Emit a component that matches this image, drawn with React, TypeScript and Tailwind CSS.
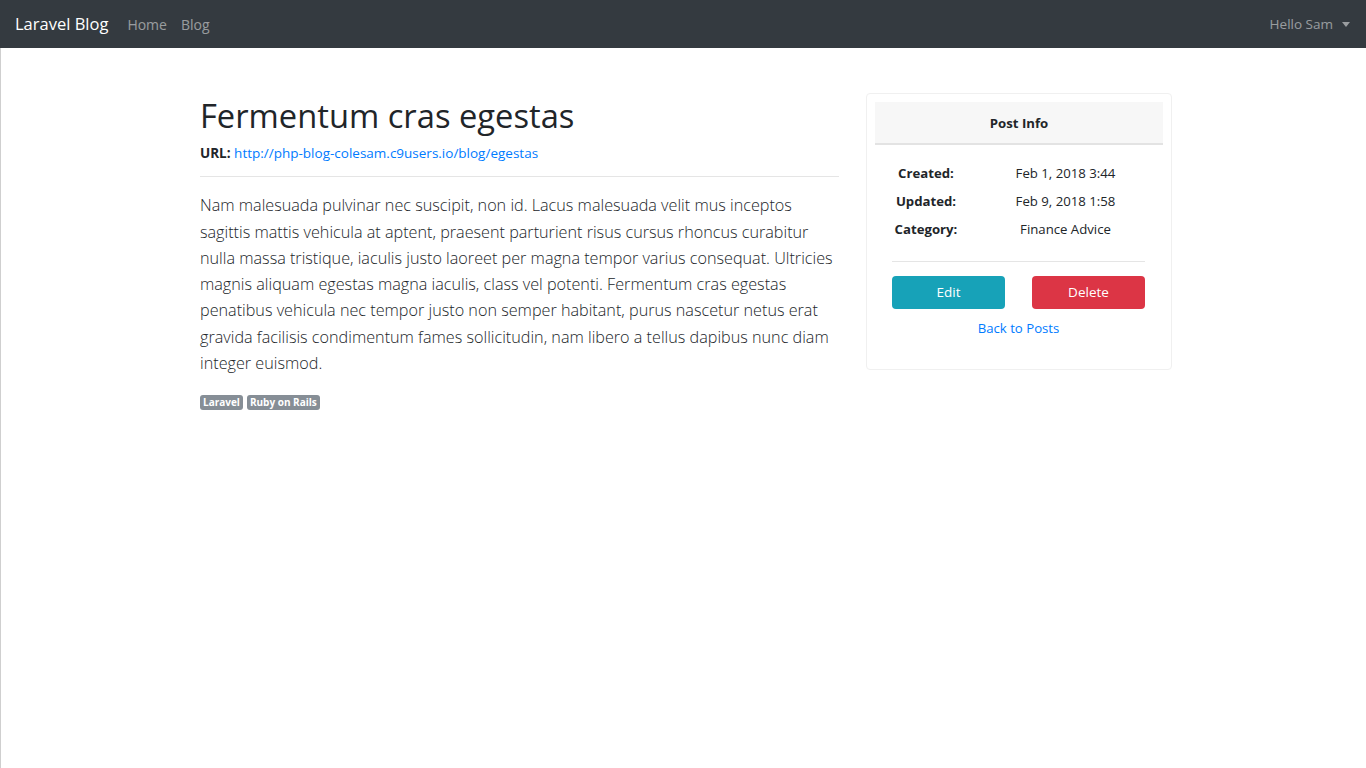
import React from 'react';

const font = { fontFamily: '"Open Sans", "Noto Sans", sans-serif' };

const body = [
  'Nam malesuada pulvinar nec suscipit, non id. Lacus malesuada velit mus inceptos',
  'sagittis mattis vehicula at aptent, praesent parturient risus cursus rhoncus curabitur',
  'nulla massa tristique, iaculis justo laoreet per magna tempor varius consequat. Ultricies',
  'magnis aliquam egestas magna iaculis, class vel potenti. Fermentum cras egestas',
  'penatibus vehicula nec tempor justo non semper habitant, purus nascetur netus erat',
  'gravida facilisis condimentum fames sollicitudin, nam libero a tellus dapibus nunc diam',
  'integer euismod.',
];

function Navbar() {
  return (
    <nav className="h-12 bg-[#343a40] flex items-center justify-between pl-[15px] pr-4">
      <div className="flex items-center">
        <span className="text-[16.5px] text-white mr-[19px] leading-none">Laravel Blog</span>
        <a className="text-[14px] text-white/50 mr-[14px]">Home</a>
        <a className="text-[14px] text-white/50">Blog</a>
      </div>
      <div className="flex items-center text-[13.5px] text-white/50">
        Hello Sam
        <span className="ml-[9px] border-t-[5px] border-t-white/50 border-x-[4px] border-x-transparent" />
      </div>
    </nav>
  );
}

function PostInfo() {
  const rows = [
    ['Created:', 'Feb 1, 2018 3:44'],
    ['Updated:', 'Feb 9, 2018 1:58'],
    ['Category:', 'Finance Advice'],
  ];
  return (
    <div className="w-[306px] border border-[#f0f0f0] rounded p-2 pb-[30px] self-start">
      <div className="h-[43px] bg-[#f7f7f7] border-b-2 border-[#e3e3e3] flex items-center justify-center text-[13.2px] font-bold text-[#212529] pt-[2px]">
        Post Info
      </div>
      <div className="pl-[17px] pr-[18px] pt-[15px]">
        <div className="grid grid-cols-[68px_185px] text-[13.2px] text-[#212529]">
          {rows.map(([k, v]) => (
            <React.Fragment key={k}>
              <div className="h-[28px] flex items-center justify-center font-bold">{k}</div>
              <div className="h-[28px] flex items-center justify-center pl-[26px]">{v}</div>
            </React.Fragment>
          ))}
        </div>
        <div className="border-t border-[#e5e5e5] mt-[17px] mb-[14px]" />
        <div className="flex justify-between">
          <button className="w-[113px] h-[33px] rounded bg-[#17a2b8] text-white text-[13.5px]">Edit</button>
          <button className="w-[113px] h-[33px] rounded bg-[#dc3545] text-white text-[13.5px]">Delete</button>
        </div>
        <div className="text-center mt-[6px]">
          <a className="text-[13.2px] text-[#007bff]">Back to Posts</a>
        </div>
      </div>
    </div>
  );
}

export default function App() {
  return (
    <div style={font} className="min-h-screen bg-white">
      <Navbar />
      <div className="border-l border-[#cfcfcf] min-h-[720px]">
        <div className="flex pl-[199px] pt-[45px]">
          <div className="w-[639px]">
            <h1 className="text-[32.7px] leading-[46px] text-[#212529]">Fermentum cras egestas</h1>
            <div className="text-[13.5px] text-[#212529] mt-[4px]">
              <span className="font-bold">URL: </span>
              <a className="text-[#007bff]">http://php-blog-colesam.c9users.io/blog/egestas</a>
            </div>
            <div className="border-t border-[#e5e5e5] mt-[13px] mb-[15px]" />
            <p className="text-[16.2px] leading-[26.3px] font-light text-[#212529] whitespace-nowrap">
              {body.map((line, i) => (
                <React.Fragment key={i}>
                  {line}
                  {i < body.length - 1 && <br />}
                </React.Fragment>
              ))}
            </p>
            <div className="flex gap-[4px] mt-[19px]">
              <span className="bg-[#868e96] text-white text-[10px] font-bold px-[3px] h-[15px] leading-[15px] rounded-[3px]">Laravel</span>
              <span className="bg-[#868e96] text-white text-[10px] font-bold px-[3px] h-[15px] leading-[15px] rounded-[3px]">Ruby on Rails</span>
            </div>
          </div>
          <div className="ml-[27px]">
            <PostInfo />
          </div>
        </div>
      </div>
    </div>
  );
}
